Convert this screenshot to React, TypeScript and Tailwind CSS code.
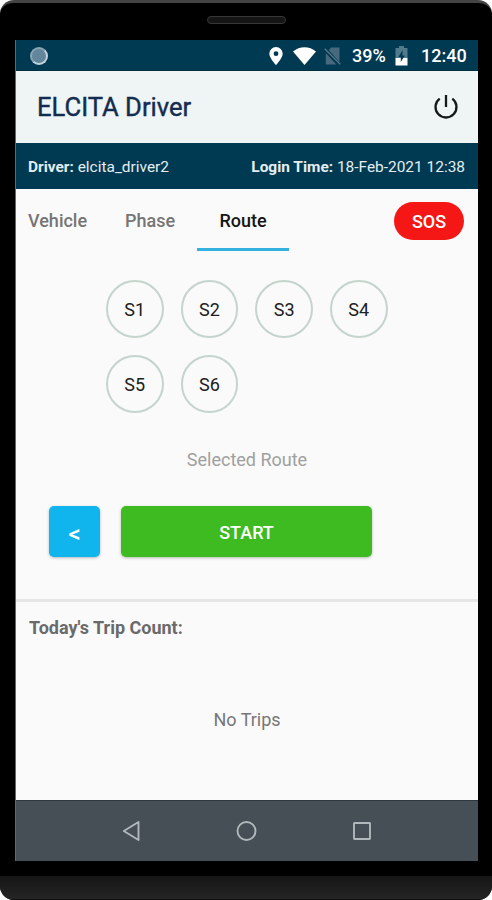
import React from "react";

function StatusBar() {
  return (
    <div className="flex h-[31px] items-center justify-between border-b border-[#02303f] bg-[#003a52] pl-[14px] pr-[11px] pt-px text-white">
      <div className="size-[18px] rounded-full border-2 border-[#8aa5b4] border-b-[#c3d3dc] border-r-[#c3d3dc] bg-[#62869b]" />
      <div className="flex items-center">
        <svg className="h-[18px] w-[14px]" viewBox="0 0 14 18">
          <path fillRule="evenodd" fill="#fff" d="M7 0a6.700 6.700 0 0 0-6.700 6.700C.3 11 7 18 7 18s6.700-7 6.700-11.300A6.700 6.700 0 0 0 7 0Zm0 4.300a2.400 2.400 0 1 1 0 4.800 2.400 2.400 0 0 1 0-4.800Z" />
        </svg>
        <svg className="ml-[10px] h-[18px] w-[23px]" viewBox="0 0 23 18">
          <path fill="#fff" d="M0 4.500C6.500-1.200 16.500-1.200 23 4.500L11.500 18Z" />
        </svg>
        <svg className="ml-[8px] h-[18px] w-[17px]" viewBox="0 0 17 18">
          <path fill="#46697d" d="M7 .5h8.500V15L4.700 3.200ZM1.800 6 12.300 17.500H1.800Z" />
          <path stroke="#597889" strokeWidth="1.300" d="m.7 1.800 15.500 15.500" />
        </svg>
        <span className="ml-[11px] w-[34px] whitespace-nowrap pt-px text-[18px] font-medium leading-none">39%</span>
        <svg className="ml-[9px] h-[20px] w-[13px]" viewBox="0 0 13 20">
          <path fill="#53798c" d="M4 0h5v2h3.500v10H.5V2H4Z" />
          <path fill="#fff" d="M.5 12h12v7.500H.5Z" />
          <path fill="#003a52" d="M7.500 4 3.500 11h2.300v5l4-6.500H7.500Z" />
        </svg>
        <span className="ml-[13px] w-[46px] whitespace-nowrap pt-px text-[18px] font-medium leading-none">12:40</span>
      </div>
    </div>
  );
}

function Header() {
  return (
    <header className="flex h-[72px] items-center justify-between bg-[#eff5f4] pl-[21px] pr-[19px]">
      <h1 className="whitespace-nowrap pt-px text-[25.600px] leading-none text-[#142c50] [-webkit-text-stroke:0.4px_#142c50]">ELCITA Driver</h1>
      <svg className="size-[26px]" viewBox="0 0 26 26" fill="none" stroke="#161a1b" strokeWidth="2.300">
        <path d="M13 1v12M6.700 4.600a10.500 10.500 0 1 0 12.600 0" />
      </svg>
    </header>
  );
}

function DriverBar() {
  return (
    <div className="flex h-[46px] items-center justify-between whitespace-nowrap bg-[#003a52] pl-[12px] pr-[13px] pt-[3px] text-[15.450px] leading-none text-[#e4edf1]">
      <div><b>Driver:</b> elcita_driver2</div>
      <div><b>Login Time:</b> 18-Feb-2021 12:38</div>
    </div>
  );
}

function Tabs() {
  return (
    <nav className="flex h-[62px] items-start text-[18px] font-medium leading-none text-[#757575]">
      <button className="ml-[12px] mt-[23px] w-[60px] whitespace-nowrap text-left">Vehicle</button>
      <button className="ml-[37px] mt-[23px] w-[51px] whitespace-nowrap text-left">Phase</button>
      <button className="ml-[21px] h-[62px] w-[92px] border-b-[3px] border-[#35b1e0] pb-[18px] pt-[23px] leading-none text-[#151515]">Route</button>
      <button className="ml-[105px] mt-[13px] h-[38px] w-[70px] rounded-full bg-[#f51616] pt-px text-white">SOS</button>
    </nav>
  );
}

function RouteGrid() {
  return (
    <div className="ml-[90px] mt-[29px] grid w-[281px] grid-cols-4 gap-x-[17.700px] gap-y-[17.500px]">
      {["S1", "S2", "S3", "S4", "S5", "S6"].map((s) => (
        <button key={s} className="flex size-[57.500px] items-center justify-center rounded-full border-2 border-[#c5d4cd] pt-[2px] text-[18px] leading-none text-[#202020]">
          {s}
        </button>
      ))}
    </div>
  );
}

function NavBar() {
  return (
    <div className="flex h-[61px] items-center border-t border-[#30373c] bg-[#464f55] pl-[106px]">
      <svg className="mb-px h-[22px] w-[250px]" viewBox="0 0 250 22" fill="none" stroke="#b1b8bb" strokeWidth="1.900">
        <path strokeLinejoin="round" d="M1.800 11 16.500 2v18Z" />
        <circle cx="124.500" cy="11" r="9" />
        <rect x="232" y="3" width="16" height="16" rx=".5" />
      </svg>
    </div>
  );
}

export default function App() {
  return (
    <div className="h-[900px] w-[492px] overflow-hidden bg-white font-[Roboto,'Liberation_Sans',sans-serif]">
      <div className="flex h-[900px] flex-col overflow-hidden rounded-[14px] border-t-[3px] border-[#444] bg-black">
        <div className="flex h-[37px] shrink-0 items-start justify-center pt-[13px]">
          <div className="h-[8px] w-[79px] rounded-full border border-[#373737] bg-[#151515]" />
        </div>
        <main className="ml-[15px] flex h-[821px] w-[463px] shrink-0 flex-col border-l border-[#666] bg-[#fafafa]">
          <StatusBar />
          <Header />
          <DriverBar />
          <Tabs />
          <RouteGrid />
          <p className="mt-[37.500px] text-center text-[18px] leading-[20px] text-[#a0a0a0]">Selected Route</p>
          <div className="ml-[33px] mt-[36px] flex h-[51px] gap-[21px] font-medium text-white">
            <button className="w-[51px] rounded-[5px] bg-[#10b5ed] pt-[4px] text-[24px] leading-none shadow-[0_1px_3px_#0004]">&lt;</button>
            <button className="w-[251px] rounded-[5px] bg-[#3dbb20] pt-[3px] text-[18px] leading-none shadow-[0_1px_3px_#0004]">START</button>
          </div>
          <hr className="mt-[42px] border-0 border-t-[3px] border-[#e6e6e6]" />
          <h2 className="ml-[13px] mt-[16px] text-[18px] font-bold leading-[20px] text-[#6a6a6a]">Today's Trip Count:</h2>
          <p className="mt-[72px] flex-1 text-center text-[18px] leading-[20px] text-[#777]">No Trips</p>
          <NavBar />
        </main>
        <div className="mt-[15px] h-[24px] border-b border-[#111] bg-gradient-to-b from-[#151515] to-[#252525]" />
      </div>
    </div>
  );
}
